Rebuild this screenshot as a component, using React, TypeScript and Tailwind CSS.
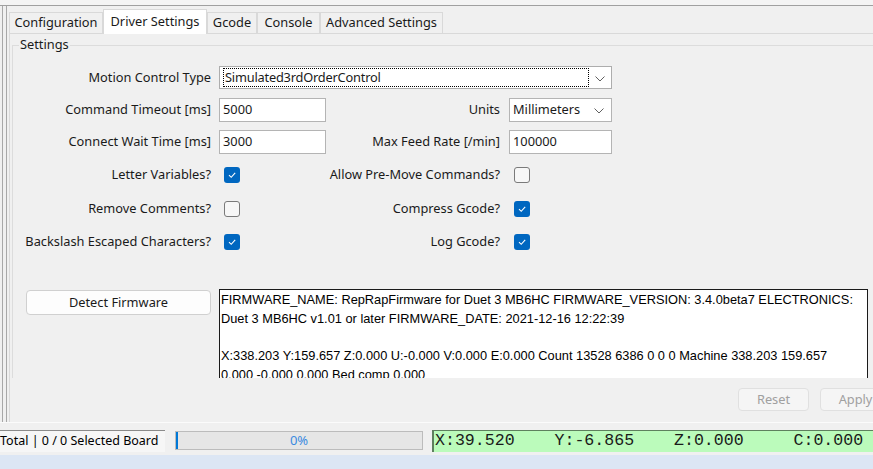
import React from "react";

const ui = "font-['Noto_Sans',sans-serif]";

const Check = ({ on }: { on: boolean }) =>
  on ? (
    <div className="w-[16px] h-[16px] rounded-[3px] bg-[#0067c0] flex items-center justify-center">
      <svg width="10" height="10" viewBox="0 0 10 10">
        <path d="M2 5.2 L4.2 7.3 L8.2 2.8" fill="none" stroke="#ffffff" strokeWidth="1.1" />
      </svg>
    </div>
  ) : (
    <div className="w-[16px] h-[16px] rounded-[3px] border border-[#7a7a7a] bg-[#f7f7f7]" />
  );

const Chevron = () => (
  <svg width="10" height="6" viewBox="0 0 10 6">
    <path d="M0.5 0.5 L5 5 L9.5 0.5" fill="none" stroke="#606060" strokeWidth="1" />
  </svg>
);

const Tab = ({ label, w, active }: { label: string; w: string; active?: boolean }) => (
  <div
    className={
      active
        ? `${w} shrink-0 h-[25px] -mb-[1px] bg-white border border-b-0 border-[#d9d9d9] flex items-start pt-[2px] justify-center relative z-10`
        : `${w} shrink-0 h-[21px] bg-[#f0f0f0] border border-b-0 border-[#d9d9d9] flex items-center justify-center`
    }
  >
    {label}
  </div>
);

export default function App() {
  return (
    <div className={`w-[873px] h-[469px] overflow-hidden bg-[#f0f0f0] flex flex-col text-[12.8px] text-[#1a1a1a] ${ui}`}>
      {/* top edge */}
      <div className="h-[6px] shrink-0 border-b border-[#a0a0a0] bg-[#f4f4f4]" />

      {/* main window area */}
      <div className="h-[416px] shrink-0 pl-[2px]">
        <div className="h-full border-l border-[#a8a8a8] pl-[3px]">
          <div className="h-full border-l border-[#a8a8a8] pl-[2px] flex flex-col">
            {/* tabs */}
            <div className="h-[27px] shrink-0 flex items-end">
              <Tab label="Configuration" w="w-[94px]" />
              <Tab label="Driver Settings" w="w-[104px]" active />
              <Tab label="Gcode" w="w-[50px]" />
              <Tab label="Console" w="w-[63px]" />
              <Tab label="Advanced Settings" w="w-[123px]" />
            </div>

            {/* tab pane */}
            <div className="flex-1 border-t border-l border-[#d9d9d9] pl-[2px] pt-[11px] flex flex-col">
              {/* group box */}
              <div className="relative h-[333px] shrink-0">
                <div className="h-full border-t border-l border-[#dcdcdc] overflow-hidden">
                  <div className="pt-[20px] flex flex-col">
                    {/* Motion control */}
                    <div className="h-[23px] flex items-center">
                      <div className="w-[198px] text-right whitespace-nowrap">Motion Control Type</div>
                      <div className="ml-[8px] w-[393px] h-[23px] border border-[#adadad] bg-white flex items-center">
                        <div className="ml-[3px] w-[366px] h-[19px] border border-dotted border-black flex items-center pl-[1px] tracking-[-0.2px]">
                          Simulated3rdOrderControl
                        </div>
                        <div className="flex-1 flex justify-center pt-[2px]">
                          <Chevron />
                        </div>
                      </div>
                    </div>

                    {/* Command timeout / Units */}
                    <div className="mt-[9px] h-[24px] flex items-center">
                      <div className="w-[198px] text-right whitespace-nowrap">Command Timeout [ms]</div>
                      <div className="ml-[8px] w-[107px] h-[24px] border border-[#b4b4b4] bg-white flex items-center pl-[3px]">5000</div>
                      <div className="w-[174px] text-right">Units</div>
                      <div className="ml-[9px] w-[103px] h-[24px] border border-[#b4b4b4] bg-white flex items-center pl-[3px]">
                        <span className="flex-1">Millimeters</span>
                        <span className="w-[24px] flex justify-center pt-[2px]">
                          <Chevron />
                        </span>
                      </div>
                    </div>

                    {/* Connect wait / max feed */}
                    <div className="mt-[8px] h-[24px] flex items-center">
                      <div className="w-[198px] text-right whitespace-nowrap">Connect Wait Time [ms]</div>
                      <div className="ml-[8px] w-[107px] h-[24px] border border-[#b4b4b4] bg-white flex items-center pl-[3px]">3000</div>
                      <div className="w-[174px] text-right whitespace-nowrap">Max Feed Rate [/min]</div>
                      <div className="ml-[9px] w-[103px] h-[24px] border border-[#b4b4b4] bg-white flex items-center pl-[3px]">100000</div>
                    </div>

                    {/* check rows */}
                    {[
                      ["Letter Variables?", true, "Allow Pre-Move Commands?", false, "mt-[9px]"],
                      ["Remove Comments?", false, "Compress Gcode?", true, "mt-[10px]"],
                      ["Backslash Escaped Characters?", true, "Log Gcode?", true, "mt-[9px]"],
                    ].map(([l, lo, r, ro, mt]) => (
                      <div key={l as string} className={`${mt} h-[24px] flex items-center`}>
                        <div className="w-[198px] text-right whitespace-nowrap">{l as string}</div>
                        <div className="ml-[13px]">
                          <Check on={lo as boolean} />
                        </div>
                        <div className="w-[260px] text-right whitespace-nowrap">{r as string}</div>
                        <div className="ml-[14px]">
                          <Check on={ro as boolean} />
                        </div>
                      </div>
                    ))}

                    {/* firmware */}
                    <div className="mt-[35px] flex items-start">
                      <div className="ml-[13px] mt-[1px] w-[185px] h-[25px] rounded-[4px] border border-[#d0d0d0] bg-[#fdfdfd] flex items-center justify-center">
                        Detect Firmware
                      </div>
                      <div className="ml-[8px] w-[649px] h-[120px] border border-[#1a1a1a] bg-white pl-[1px] pt-[1px] font-['Liberation_Sans',Arial,sans-serif] text-[12.8px] leading-[18.7px] text-black whitespace-nowrap">
                        <div>FIRMWARE_NAME: RepRapFirmware for Duet 3 MB6HC FIRMWARE_VERSION: 3.4.0beta7 ELECTRONICS:</div>
                        <div>Duet 3 MB6HC v1.01 or later FIRMWARE_DATE: 2021-12-16 12:22:39</div>
                        <div>&nbsp;</div>
                        <div>X:338.203 Y:159.657 Z:0.000 U:-0.000 V:0.000 E:0.000 Count 13528 6386 0 0 0 Machine 338.203 159.657</div>
                        <div>0.000 -0.000 0.000 Bed comp 0.000</div>
                      </div>
                    </div>
                  </div>
                </div>
                {/* group box caption sits over the border */}
                <div className="absolute left-[7px] -top-[8px] px-[1px] bg-[#f0f0f0] leading-[15px]">Settings</div>
              </div>

              {/* Reset / Apply */}
              <div className="mt-[10px] flex">
                <div className="ml-[726px] shrink-0 w-[71px] h-[23px] rounded-[4px] border border-[#e0e0e0] bg-[#f5f5f5] text-[#a0a0a0] flex items-center justify-center">
                  Reset
                </div>
                <div className="ml-[11px] w-[71px] shrink-0 h-[23px] rounded-[4px] border border-[#e0e0e0] bg-[#f5f5f5] text-[#a0a0a0] flex items-center justify-center">
                  Apply
                </div>
              </div>
            </div>
          </div>
        </div>
      </div>

      {/* status bar */}
      <div className="h-[33px] shrink-0 border-t border-[#fbfbfb] pt-[7px] flex items-start">
        <div className="w-[165px] shrink-0 h-[22px] border-t border-[#8a8a8a] bg-[#f6f6f6] flex items-center text-[12.5px] text-black whitespace-nowrap">
          Total | 0 / 0 Selected Board
        </div>
        <div className="ml-[10px] mt-[1px] shrink-0 w-[248px] h-[19px] border border-[#bcbcbc] bg-[#e6e6e6] flex">
          <div className="w-[2px] bg-[#0078d7]" />
          <div className="flex-1 flex items-center justify-center text-[#3b8be0] text-[13px] pr-[2px]">0%</div>
        </div>
        <div className="ml-[9px] shrink-0 w-[441px] h-[22px] border-t border-l-2 border-[#5e805e] bg-[#bbfbbb] flex items-center pl-[1px] font-['Liberation_Mono','Courier_New',monospace] text-[16.6px] text-[#1a1a1a] whitespace-pre">
          {"X:39.520    Y:-6.865    Z:0.000     C:0.000"}
        </div>
      </div>

      {/* bottom strip */}
      <div className="flex-1 bg-[#dce6f4]" />
    </div>
  );
}
